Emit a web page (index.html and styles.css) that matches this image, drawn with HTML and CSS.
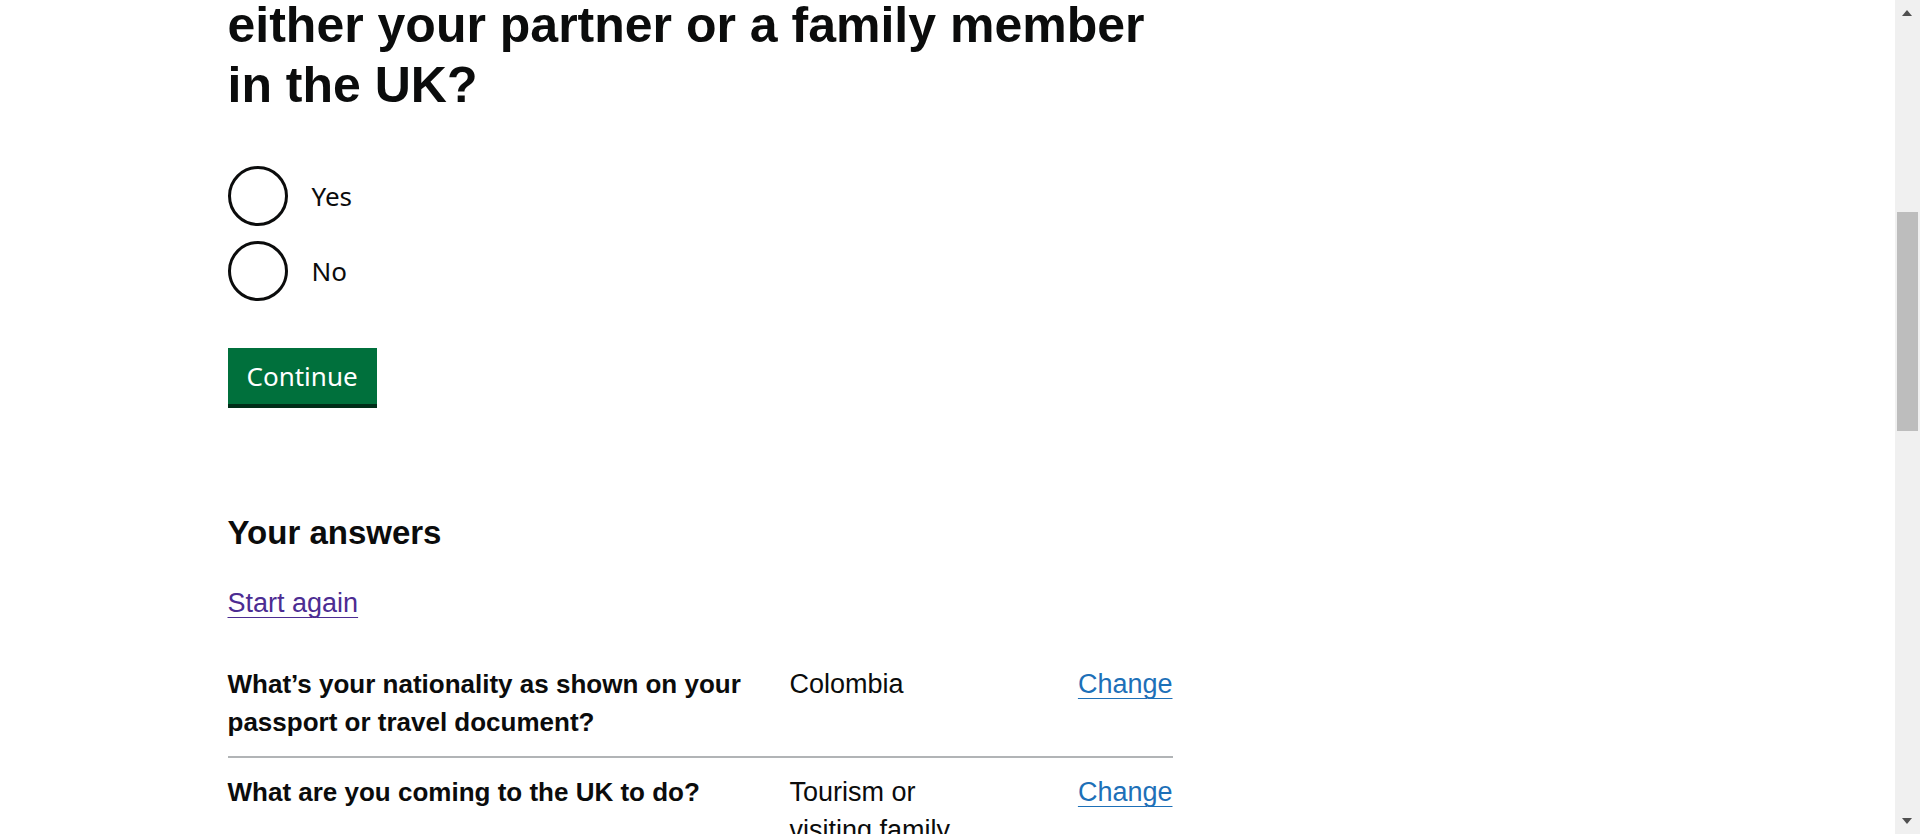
FILE: index.html
```html
<!DOCTYPE html>
<html lang="en">
<head>
<meta charset="utf-8">
<title>Check if you need a UK visa - GOV.UK</title>
<link rel="stylesheet" href="styles.css">
</head>
<body>
<div class="page">
  <header class="site-header">
    <div class="container">
      <span class="site-title">GOV.UK</span>
    </div>
  </header>
  <div class="container">
    <div class="column">
      <p class="caption">Check if you need a UK visa</p>
      <form class="question">
        <h1 class="question-title" id="question-title">Will you be travelling with or visiting either your partner or a family member in the UK?</h1>
        <div class="radios">
          <label class="radio-item"><input class="radio-input" type="radio" name="response" value="yes"><span class="radio-mark"></span><span class="radio-label">Yes</span></label>
          <label class="radio-item"><input class="radio-input" type="radio" name="response" value="no"><span class="radio-mark"></span><span class="radio-label">No</span></label>
        </div>
        <button class="button" type="button">Continue</button>
      </form>

      <section class="answers">
        <h2 class="answers-title">Your answers</h2>
        <p class="answers-restart"><a class="link link-visited" href="#">Start again</a></p>
        <dl class="summary">
          <div class="summary-row">
            <dt class="summary-key">What’s your nationality as shown on your passport or travel document?</dt>
            <dd class="summary-value">Colombia</dd>
            <dd class="summary-action"><a class="link" href="#">Change</a></dd>
          </div>
          <div class="summary-row">
            <dt class="summary-key">What are you coming to the UK to do?</dt>
            <dd class="summary-value">Tourism or visiting family and friends</dd>
            <dd class="summary-action"><a class="link" href="#">Change</a></dd>
          </div>
          <div class="summary-row">
            <dt class="summary-key">Are you travelling to the UK with an Article 10 or 20 card?</dt>
            <dd class="summary-value">No</dd>
            <dd class="summary-action"><a class="link" href="#">Change</a></dd>
          </div>
        </dl>
      </section>
    </div>
  </div>
  <footer class="site-footer"></footer>
</div>

<div class="fake-scrollbar" aria-hidden="true">
  <span class="scroll-arrow scroll-arrow-up"></span>
  <span class="scroll-thumb"></span>
  <span class="scroll-arrow scroll-arrow-down"></span>
</div>
<script src="script.js"></script>
</body>
</html>
```

FILE: styles.css
```css
html {
  overflow: hidden;
}

body {
  margin: 0;
  padding-right: 25px;
  background: #ffffff;
  color: #0b0c0c;
  font-family: "Liberation Sans", Arial, sans-serif;
}

.page {
  display: flex;
  flex-direction: column;
}

.site-header {
  background: #0b0c0c;
  padding: 15px 0;
}

.site-title {
  color: #ffffff;
  font-weight: bold;
  font-size: 40px;
  line-height: 45px;
}

.container {
  max-width: 1440px;
  margin: 0 auto;
  width: 100%;
}

.column {
  width: 945px;
  padding-top: 45px;
  padding-bottom: 200px;
}

.caption {
  margin: 0 0 8px;
  font-size: 30px;
  line-height: 38px;
  color: #505a5f;
}

.question-title {
  margin: 0 0 51px;
  font-size: 50px;
  line-height: 60px;
  font-weight: bold;
}

.question {
  display: flex;
  flex-direction: column;
  align-items: flex-start;
}

.radios {
  display: flex;
  flex-direction: column;
  gap: 15px;
  margin-bottom: 47px;
}

.radio-item {
  display: flex;
  align-items: center;
  gap: 24px;
  height: 60px;
  cursor: pointer;
}

.radio-input {
  position: absolute;
  opacity: 0;
  width: 0;
  height: 0;
  margin: 0;
}

.radio-mark {
  box-sizing: border-box;
  width: 60px;
  height: 60px;
  border: 3px solid #0b0c0c;
  border-radius: 50%;
  flex: none;
}

.radio-label {
  font-family: "Noto Sans", "Open Sans", sans-serif;
  font-size: 26px;
  line-height: 32px;
}

.button {
  font-family: "Noto Sans", "Open Sans", sans-serif;
  font-size: 26px;
  line-height: 32px;
  color: #ffffff;
  background: #00703c;
  border: 0;
  border-radius: 0;
  box-shadow: 0 4px 0 #002d18;
  height: 56px;
  padding: 0 19px;
  margin: 0;
  cursor: pointer;
}

.answers {
  margin-top: 109px;
}

.answers-title {
  margin: 0 0 31px;
  font-size: 33px;
  line-height: 40px;
  font-weight: bold;
}

.answers-restart {
  margin: 0 0 28px;
  font-size: 27px;
  line-height: 38px;
}

.link {
  color: #1d70b8;
  text-decoration: underline;
  text-decoration-thickness: 1px;
  text-underline-offset: 5px;
}

.link-visited {
  color: #4c2c92;
}

.summary {
  margin: 0;
}

.summary-row {
  display: grid;
  grid-template-columns: 562px 220px 1fr;
  border-bottom: 2px solid #b1b4b6;
  padding: 15px 0;
}

.summary-key {
  margin: 0;
  padding-right: 30px;
  font-weight: bold;
  font-size: 26px;
  line-height: 38px;
}

.summary-value {
  margin: 0;
  padding-right: 30px;
  font-size: 27px;
  line-height: 38px;
}

.summary-action {
  margin: 0;
  text-align: right;
  font-size: 27px;
  line-height: 38px;
}

.site-footer {
  height: 400px;
  background: #f3f2f1;
  border-top: 1px solid #1d70b8;
}

.fake-scrollbar {
  position: fixed;
  top: 0;
  right: 0;
  width: 25px;
  height: 100vh;
  background: #f0f0f0;
}

.scroll-thumb {
  position: absolute;
  top: 212px;
  left: 2px;
  width: 21px;
  height: 219px;
  background: #bdbdbd;
}

.scroll-arrow {
  position: absolute;
  left: 7px;
  width: 0;
  height: 0;
  border-left: 5.5px solid transparent;
  border-right: 5.5px solid transparent;
}

.scroll-arrow-up {
  top: 10px;
  border-bottom: 6px solid #505050;
}

.scroll-arrow-down {
  bottom: 10px;
  border-top: 6px solid #505050;
}
```

FILE: script.js
```js
(function () {
  var title = document.getElementById('question-title');
  function place() {
    var top = title.getBoundingClientRect().top + window.scrollY;
    window.scrollTo(0, Math.round(top + 65));
  }
  place();
  window.addEventListener('load', place);
})();
```
